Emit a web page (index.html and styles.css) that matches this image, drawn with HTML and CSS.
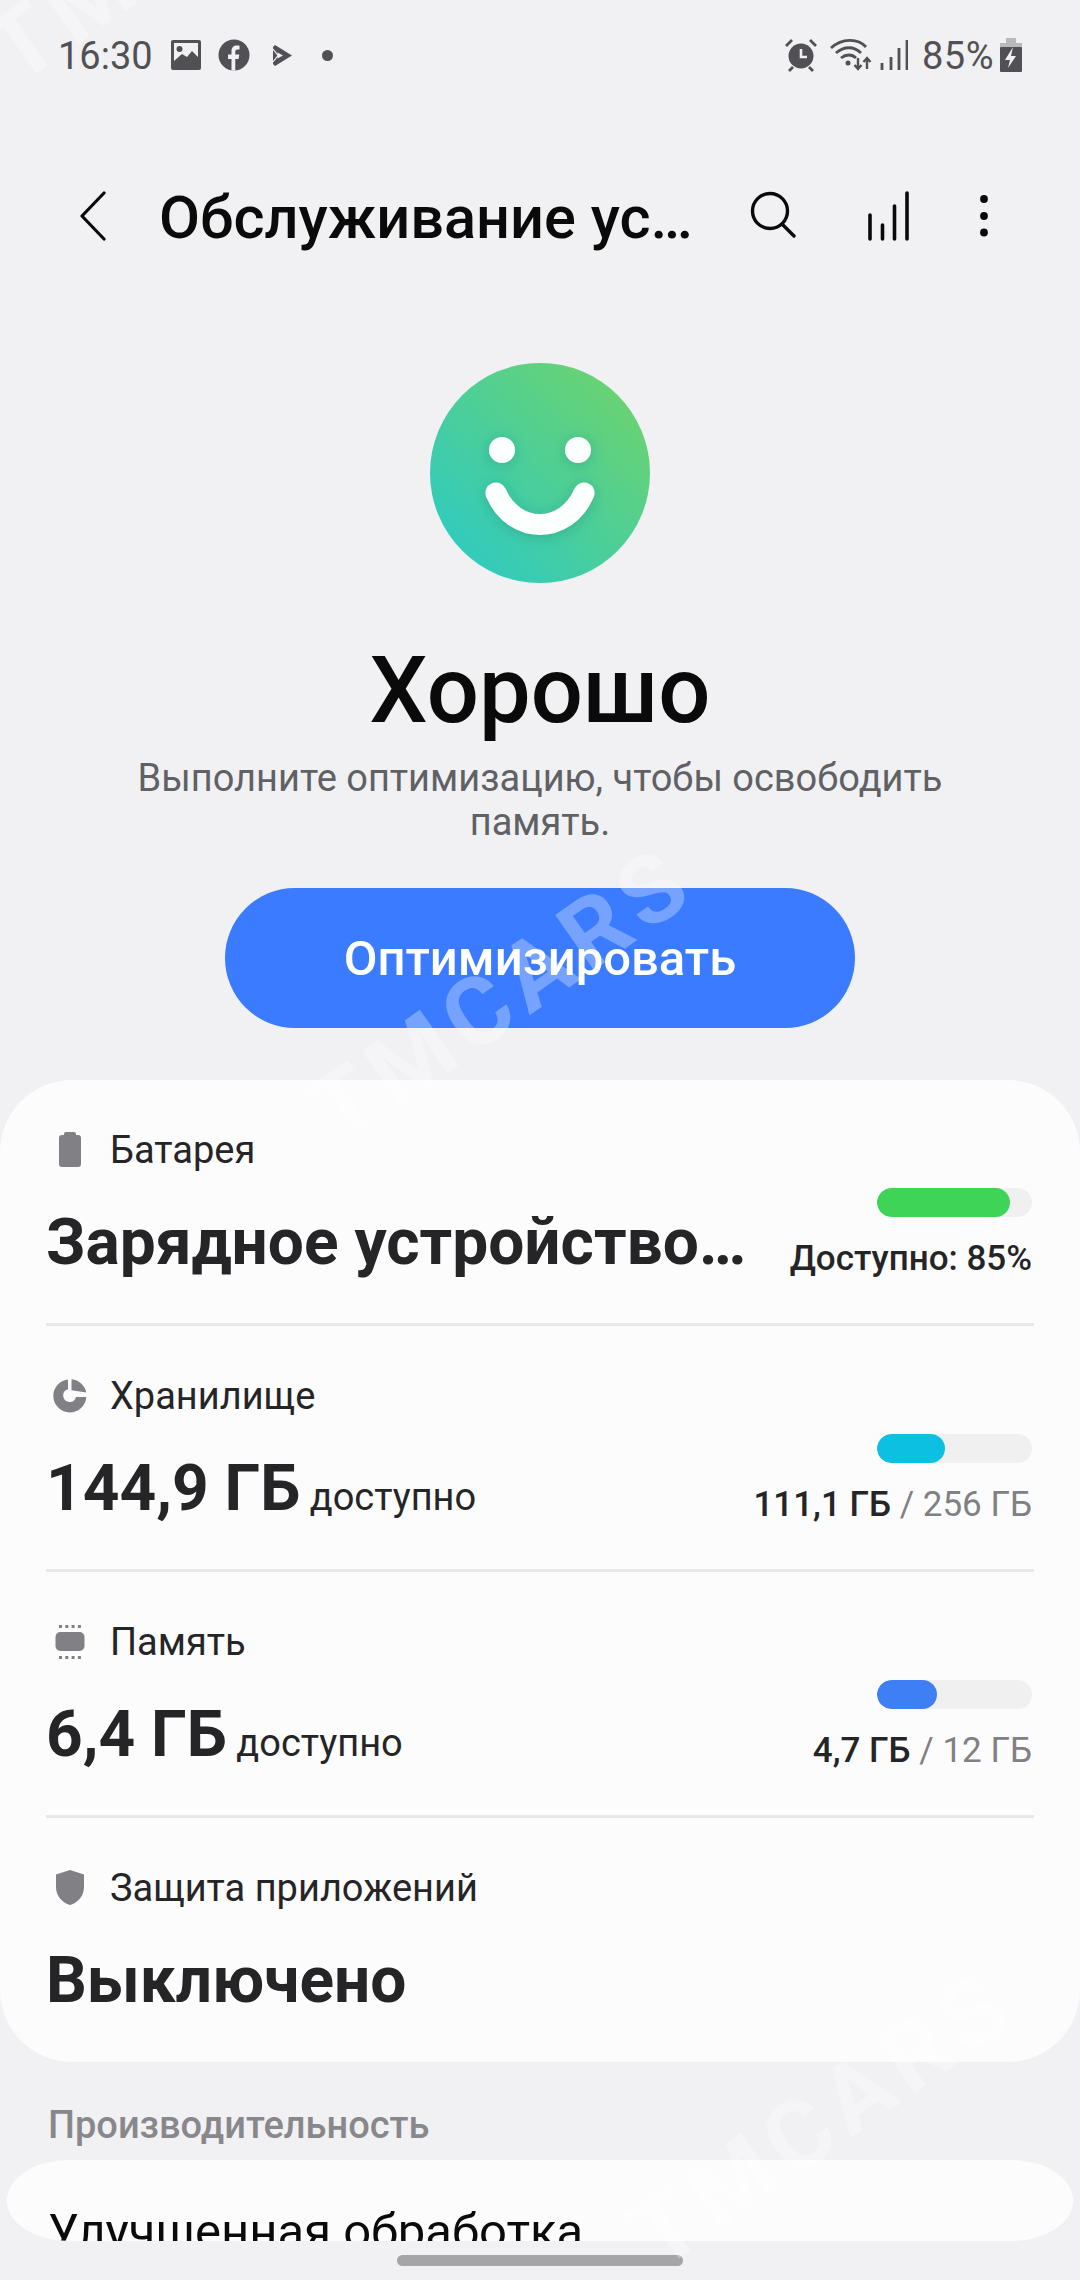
FILE: index.html
```html
<!DOCTYPE html>
<html lang="ru">

<head>
    <meta charset="UTF-8">
    <title>Обслуживание устройства</title>
    <link rel="stylesheet" href="styles.css">
</head>

<body>
    <div class="screen">
        <div class="status-bar">
            <div class="status-left">
                <span class="status-time">16:30</span>
                <svg class="status-image" width="32" height="32" viewBox="0 0 32 32">
                    <rect x="1" y="1" width="30" height="30" rx="2" fill="#515155" />
                    <rect x="4" y="4" width="24" height="19" fill="#f1f1f4" />
                    <circle cx="9.500" cy="10" r="3" fill="#515155" />
                    <path d="M4 22l8-7 5 3 5-6 6 6v10H4z" fill="#515155" />
                </svg>
                <svg class="status-fb" width="32" height="32" viewBox="0 0 32 32">
                    <circle cx="16" cy="16" r="15.500" fill="#515155" />
                    <path d="M13.500 31.500V20H10v-4.500h3.500V12c0-3.600 2.200-5.500 5.300-5.500 1.400 0 2.700.2 2.700.2v3.800h-1.900c-1.800 0-2.300 1.100-2.300 2.200v2.800h4l-.7 4.500h-3.300v11.500z" fill="#f1f1f4" />
                </svg>
                <svg class="status-play" width="19" height="21" viewBox="0 0 19 21">
                    <path d="M0 2l2-2 17 10.500L2 21l-2-2z" fill="#515155" />
                    <path d="M4.500 7.500l5.500 3-5.500 3z" fill="#f1f1f4" />
                    <path d="M0 4l5 6.500-5 6.500" fill="none" stroke="#f1f1f4" stroke-width="1.200" />
                </svg>
                <span class="status-dot"></span>
            </div>
            <div class="status-right">
                <svg class="status-alarm" width="34" height="34" viewBox="0 0 34 34">
                    <circle cx="17" cy="18" r="12.500" fill="#515155" />
                    <path d="M17 11v8h6" fill="none" stroke="#f1f1f4" stroke-width="2.600" />
                    <path d="M2 8l6-6M32 8l-6-6M5 33l4-4M29 33l-4-4" stroke="#515155" stroke-width="2.800" fill="none" />
                </svg>
                <svg class="status-wifi" width="42" height="34" viewBox="0 0 42 34">
                    <path d="M1 10C12 0 28 0 36 9M6 15c8-7 18-7 25 0M11 20c5-4 11-4 15 0" fill="none" stroke="#515155" stroke-width="2.800" />
                    <circle cx="18" cy="25" r="2.500" fill="#515155" />
                    <path d="M28 20v11M24.500 27l3.500 4 3.500-4M37 31V20M33.500 24l3.500-4 3.500 4" fill="none" stroke="#515155" stroke-width="2.400" />
                </svg>
                <svg class="status-signal" width="28" height="32" viewBox="0 0 28 32">
                    <path d="M2 31v-7M11 31V18M19 31V9M27 31V1" stroke="#515155" stroke-width="2.800" fill="none" />
                </svg>
                <span class="status-battery-text">85%</span>
                <svg class="status-battery" width="22" height="34" viewBox="0 0 22 34">
                    <rect x="6" y="0" width="10" height="5" fill="#b9b9bc" />
                    <rect x="0" y="5" width="22" height="5" fill="#b9b9bc" />
                    <rect x="0" y="9" width="22" height="25" rx="1" fill="#515155" />
                    <path d="M13 9 5 22h5l-2 8 8-12h-5l2-9z" fill="#f1f1f4" />
                </svg>
            </div>
        </div>

        <div class="app-header">
            <svg class="back-icon" width="26" height="50" viewBox="0 0 26 50">
                <path d="M24 2 2 25l22 23" fill="none" stroke="#0a0a0a" stroke-width="3.200" stroke-linecap="round" stroke-linejoin="round" />
            </svg>
            <h1 class="app-title">Обслуживание ус…</h1>
            <svg class="search-icon" width="46" height="50" viewBox="0 0 46 50">
                <circle cx="20" cy="20" r="17.500" fill="none" stroke="#0a0a0a" stroke-width="3.400" />
                <path d="M32 33l12 12" fill="none" stroke="#0a0a0a" stroke-width="3.400" stroke-linecap="round" />
            </svg>
            <svg class="chart-icon" width="42" height="50" viewBox="0 0 42 50">
                <path d="M2 48V24M14.500 48V34M26.500 48V15M39 48V2" fill="none" stroke="#0a0a0a" stroke-width="3.600" stroke-linecap="round" />
            </svg>
            <svg class="more-icon" width="10" height="44" viewBox="0 0 10 44">
                <circle cx="5" cy="5" r="3.900" fill="#0a0a0a" />
                <circle cx="5" cy="22" r="3.900" fill="#0a0a0a" />
                <circle cx="5" cy="38.500" r="3.900" fill="#0a0a0a" />
            </svg>
        </div>

        <div class="summary">
            <svg class="smiley" width="222" height="222" viewBox="0 0 222 222">
                <defs>
                    <linearGradient id="smileyFill" x1="0.150" y1="0.850" x2="0.850" y2="0.150">
                        <stop offset="0" stop-color="#33cbbb" />
                        <stop offset="1" stop-color="#68d275" />
                    </linearGradient>
                    <filter id="smileyShadow" x="-30%" y="-30%" width="160%" height="160%">
                        <feDropShadow dx="0" dy="2" stdDeviation="7" flood-color="#1f9a86" flood-opacity="0.550" />
                    </filter>
                </defs>
                <circle cx="111" cy="111" r="110" fill="url(#smileyFill)" />
                <g filter="url(#smileyShadow)">
                    <circle cx="73" cy="88" r="13" fill="#fbfffe" />
                    <circle cx="149" cy="88" r="13" fill="#fbfffe" />
                    <path d="M67 131C85 173 137 173 155 131" fill="none" stroke="#fbfffe" stroke-width="21" stroke-linecap="round" />
                </g>
            </svg>
            <div class="summary-title">Хорошо</div>
            <p class="summary-text">Выполните оптимизацию, чтобы освободить память.</p>
            <button class="optimize-button">Оптимизировать</button>
        </div>

        <div class="card">
            <div class="stat-row">
                <div class="stat-main">
                    <div class="stat-label">
                        <svg class="stat-icon" width="44" height="38" viewBox="0 0 44 38">
                            <path d="M18 1h8a2 2 0 0 1 2 2v1h2a3 3 0 0 1 3 3v26a3 3 0 0 1-3 3H14a3 3 0 0 1-3-3V7a3 3 0 0 1 3-3h2V3a2 2 0 0 1 2-2z" fill="#808085" />
                        </svg>
                        <span>Батарея</span>
                    </div>
                    <div class="stat-value">Зарядное устройство…</div>
                </div>
                <div class="stat-side">
                    <div class="meter"><div class="meter-fill meter-green" style="width: 86%"></div></div>
                    <div class="meter-text">Доступно: 85%</div>
                </div>
            </div>

            <div class="stat-row">
                <div class="stat-main">
                    <div class="stat-label">
                        <svg class="stat-icon" width="44" height="38" viewBox="0 0 44 38">
                            <path d="M20 2.500A16.500 16.500 0 1 0 38.300 20H28a6.500 6.500 0 1 1-8-7.800z" fill="#808085" />
                            <path d="M23.500 2.300A16.500 16.500 0 0 1 38.300 15.500L23.500 13.200z" fill="#808085" />
                        </svg>
                        <span>Хранилище</span>
                    </div>
                    <div class="stat-value">144,9 ГБ<span class="stat-unit"> доступно</span></div>
                </div>
                <div class="stat-side">
                    <div class="meter"><div class="meter-fill meter-cyan" style="width: 44%"></div></div>
                    <div class="meter-text">111,1 ГБ <span class="meter-total">/ 256 ГБ</span></div>
                </div>
            </div>

            <div class="stat-row">
                <div class="stat-main">
                    <div class="stat-label">
                        <svg class="stat-icon" width="44" height="38" viewBox="0 0 44 38">
                            <rect x="7.500" y="9" width="29" height="19" rx="5" fill="#808085" />
                            <path d="M11 3.500h22M11 34.500h22" fill="none" stroke="#808085" stroke-width="3" stroke-dasharray="3 3.300" />
                        </svg>
                        <span>Память</span>
                    </div>
                    <div class="stat-value">6,4 ГБ<span class="stat-unit"> доступно</span></div>
                </div>
                <div class="stat-side">
                    <div class="meter"><div class="meter-fill meter-blue" style="width: 39%"></div></div>
                    <div class="meter-text">4,7 ГБ <span class="meter-total">/ 12 ГБ</span></div>
                </div>
            </div>

            <div class="stat-row">
                <div class="stat-main">
                    <div class="stat-label">
                        <svg class="stat-icon" width="44" height="38" viewBox="0 0 44 38">
                            <path d="M22 1l14 4.500V18c0 9-6 15.500-14 18C14 33.500 8 27 8 18V5.500z" fill="#808085" />
                        </svg>
                        <span>Защита приложений</span>
                    </div>
                    <div class="stat-value">Выключено</div>
                </div>
            </div>
        </div>

        <div class="section-title">Производительность</div>
        <div class="card-small">
            <div class="card-small-text">Улучшенная обработка</div>
        </div>

        <div class="nav-pill"></div>

        <!-- TMCARS watermark -->
        <div class="watermark mark-top">TMCARS</div>
        <div class="watermark mark-middle">TMCARS</div>
        <div class="watermark mark-bottom">TMCARS</div>
    </div>
</body>

</html>
```

FILE: styles.css
```css
:root {
    --background-color: #f1f1f4;
    --card-color: #fcfcfc;
    --text-color: #252528;
    --icon-color: #515155;
}

* {
    box-sizing: border-box;
}

body {
    margin: 0;
    font-family: 'Roboto', 'Liberation Sans', sans-serif;
    background-color: var(--background-color);
    color: var(--text-color);
}

.screen {
    position: relative;
    width: 1080px;
    height: 2280px;
    overflow: hidden;
    background-color: var(--background-color);
}

.status-bar {
    display: flex;
    justify-content: space-between;
    align-items: center;
    height: 110px;
    padding: 0 58px 0 58px;
    color: var(--icon-color);
}

.status-left,
.status-right {
    display: flex;
    align-items: center;
}

.status-time {
    font-size: 38px;
    margin-top: 2px;
    margin-right: 17px;
}

.status-fb {
    margin-left: 16px;
}

.status-play {
    margin-left: 23px;
}

.status-dot {
    width: 11px;
    height: 11px;
    margin-left: 30px;
    border-radius: 50%;
    background-color: var(--icon-color);
}

.status-wifi {
    margin-left: 12px;
}

.status-signal {
    margin-left: 8px;
}

.status-battery-text {
    font-size: 38px;
    margin-left: 14px;
    margin-top: 2px;
    letter-spacing: 0.5px;
}

.status-battery {
    margin-left: 6px;
}

.app-header {
    display: flex;
    align-items: center;
    height: 108px;
    margin-top: 52px;
    padding-left: 80px;
}

.back-icon {
    flex-shrink: 0;
}

.app-title {
    flex: none;
    width: 492px;
    margin: 3px 0 0 53px;
    font-size: 59.5px;
    font-weight: 500;
    color: #0a0a0a;
    white-space: nowrap;
    overflow: visible;
}

.search-icon {
    flex: none;
    margin-left: 99px;
}

.chart-icon {
    flex: none;
    margin-left: 72px;
}

.more-icon {
    flex: none;
    margin-left: 69px;
}

.summary {
    display: flex;
    flex-direction: column;
    align-items: center;
    padding-top: 92px;
}

.smiley {
    display: block;
}

.summary-title {
    margin-top: 54px;
    font-size: 92px;
    line-height: 106px;
    font-weight: 500;
    color: #0a0a0a;
}

.summary-text {
    width: 860px;
    margin: 12px 0 0;
    font-size: 38px;
    line-height: 44px;
    text-align: center;
    color: #606165;
}

.optimize-button {
    width: 630px;
    height: 140px;
    margin-top: 44px;
    border: none;
    border-radius: 70px;
    background-color: #3a7bff;
    color: #fff;
    font-family: inherit;
    font-size: 49px;
    font-weight: 500;
}

.card {
    height: 982px;
    margin-top: 52px;
    padding: 0 46px;
    border-radius: 72px;
    background-color: var(--card-color);
}

.stat-row {
    display: flex;
    justify-content: space-between;
    height: 246px;
    padding-top: 48px;
    border-bottom: 3px solid #e8e8e9;
}

.stat-row:last-child {
    border-bottom: none;
}

.stat-label {
    display: flex;
    align-items: center;
    height: 44px;
    padding-left: 2px;
    font-size: 38px;
}

.stat-icon {
    margin-right: 18px;
    flex-shrink: 0;
}

.stat-value {
    margin-top: 33px;
    font-size: 64px;
    line-height: 76px;
    font-weight: 700;
    white-space: nowrap;
}

.stat-unit {
    font-size: 38px;
    font-weight: 400;
}

.stat-side {
    display: flex;
    flex-direction: column;
    align-items: flex-end;
    padding-top: 60px;
    padding-right: 2px;
}

.meter {
    width: 155px;
    height: 29px;
    border-radius: 15px;
    background-color: #f0f0f0;
    overflow: hidden;
}

.meter-fill {
    height: 100%;
    border-radius: 15px;
}

.meter-green {
    background-color: #3dd458;
}

.meter-cyan {
    background-color: #0cc0e2;
}

.meter-blue {
    background-color: #3f7ff5;
}

.meter-text {
    margin-top: 21px;
    font-size: 35px;
    font-weight: 500;
    white-space: nowrap;
}

.meter-total {
    font-weight: 400;
    color: #808085;
}

.section-title {
    margin: 40px 0 0 48px;
    font-size: 38px;
    line-height: 46px;
    font-weight: 500;
    color: #88888c;
}

.card-small {
    height: 81px;
    margin: 12px 7px 0;
    padding: 43px 41px 0;
    border-radius: 62px / 40px;
    background-color: var(--card-color);
    overflow: hidden;
}

.card-small-text {
    font-size: 49px;
    line-height: 58px;
    color: #0a0a0a;
    white-space: nowrap;
}

.nav-pill {
    position: absolute;
    left: 397px;
    top: 2255px;
    width: 286px;
    height: 11px;
    border-radius: 6px;
    background-color: #a5a5a8;
}

.watermark {
    position: absolute;
    font-size: 95px;
    font-weight: 700;
    letter-spacing: 9px;
    color: rgba(255, 255, 255, 0.3);
    white-space: nowrap;
    transform: translate(-50%, -50%) rotate(-35deg);
    pointer-events: none;
}

.mark-top {
    left: 180px;
    top: -67px;
}

.mark-middle {
    left: 502px;
    top: 995px;
}

.mark-bottom {
    left: 823px;
    top: 2118px;
}
```
